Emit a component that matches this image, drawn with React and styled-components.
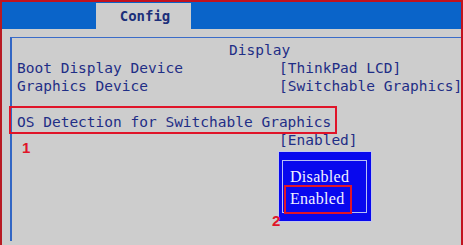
import React from "react";
import styled, { createGlobalStyle } from "styled-components";

const GlobalStyle = createGlobalStyle`
  html, body {
    margin: 0;
    padding: 0;
    background: #cdcdcd;
  }
  #root {
    width: 463px;
    height: 245px;
  }
`;

const navy = "#1f2e86";
const mark = "#e01428";

export default function App() {
  return (
    <>
      <GlobalStyle />
      <Screen>
        <TabBar>
          <Tab>Config</Tab>
        </TabBar>
        <Panel>
          <Heading>Display</Heading>
          <Row>
            <Label>Boot Display Device</Label>
            <Value>[ThinkPad LCD]</Value>
          </Row>
          <Row>
            <Label>Graphics Device</Label>
            <Value>[Switchable Graphics]</Value>
          </Row>
          <Row />
          <Highlighted>
            <Label>OS Detection for Switchable Graphics</Label>
            <Marker $left={5} $top={27}>1</Marker>
          </Highlighted>
          <Row>
            <Label />
            <Value>[Enabled]</Value>
          </Row>
          <Row>
            <Label />
            <Popup>
              <PopupFrame>
                <Option>Disabled</Option>
                <Option $selected>Enabled</Option>
              </PopupFrame>
              <Marker $left={-7} $top={61}>2</Marker>
            </Popup>
          </Row>
        </Panel>
      </Screen>
    </>
  );
}

const Screen = styled.div`
  box-sizing: border-box;
  width: 463px;
  height: 245px;
  overflow: hidden;
  background: #cdcdcd;
  border-top: 2px solid #c2121e;
  border-left: 2px solid #b81a22;
  border-right: 2px solid #c2121e;
  font-family: "DejaVu Sans Mono", "Liberation Mono", monospace;
`;

const TabBar = styled.div`
  display: flex;
  align-items: flex-end;
  height: 27px;
  padding-left: 94px;
  background: #0a64c9;
`;

const Tab = styled.div`
  width: 95px;
  height: 26px;
  display: flex;
  align-items: center;
  justify-content: center;
  padding-left: 3px;
  box-sizing: border-box;
  background: #cdcdcd;
  color: #1c2f7a;
  font-weight: bold;
  font-size: 14px;
`;

const Panel = styled.div`
  margin: 8px 0 0 8px;
  padding: 3px 0 0 5px;
  min-height: 200px;
  border-top: 1px solid #3a6cc8;
  border-left: 2px solid #3266c4;
  color: ${navy};
  font-size: 14.5px;
  line-height: 18px;
`;

const Heading = styled.div`
  height: 18px;
  padding-left: 212px;
`;

const Row = styled.div`
  display: grid;
  grid-template-columns: 262px 1fr;
  min-height: 18px;
  white-space: pre;
`;

const Label = styled.span``;

const Value = styled.span``;

const Highlighted = styled.div`
  position: relative;
  height: 18px;
  white-space: pre;
  &::after {
    content: "";
    position: absolute;
    left: -8px;
    top: -7px;
    width: 328px;
    height: 28px;
    box-sizing: border-box;
    border: 2px solid ${mark};
  }
`;

const Marker = styled.span`
  position: absolute;
  left: ${(p) => p.$left}px;
  top: ${(p) => p.$top}px;
  color: ${mark};
  font-family: "Liberation Sans", Arial, sans-serif;
  font-weight: bold;
  font-size: 15px;
  line-height: 15px;
  z-index: 2;
`;

const Popup = styled.div`
  position: relative;
  width: 92px;
  height: 69px;
  margin-top: 3px;
  padding: 8px 4px 8px 3px;
  box-sizing: border-box;
  background: #0808ee;
  box-shadow: 0 0 0 1px #c4c8ec;
`;

const PopupFrame = styled.div`
  height: 100%;
  box-sizing: border-box;
  border: 1px solid #b8bff4;
  padding-top: 5px;
`;

const Option = styled.div`
  position: relative;
  padding-left: 7px;
  color: #f2f2ff;
  font-family: "Liberation Serif", "Times New Roman", serif;
  font-size: 16px;
  line-height: 22px;
  letter-spacing: 0.3px;
  &::after {
    content: "";
    display: ${(p) => (p.$selected ? "block" : "none")};
    position: absolute;
    left: 1px;
    top: -3px;
    width: 68px;
    height: 29px;
    box-sizing: border-box;
    border: 2px solid ${mark};
  }
`;
